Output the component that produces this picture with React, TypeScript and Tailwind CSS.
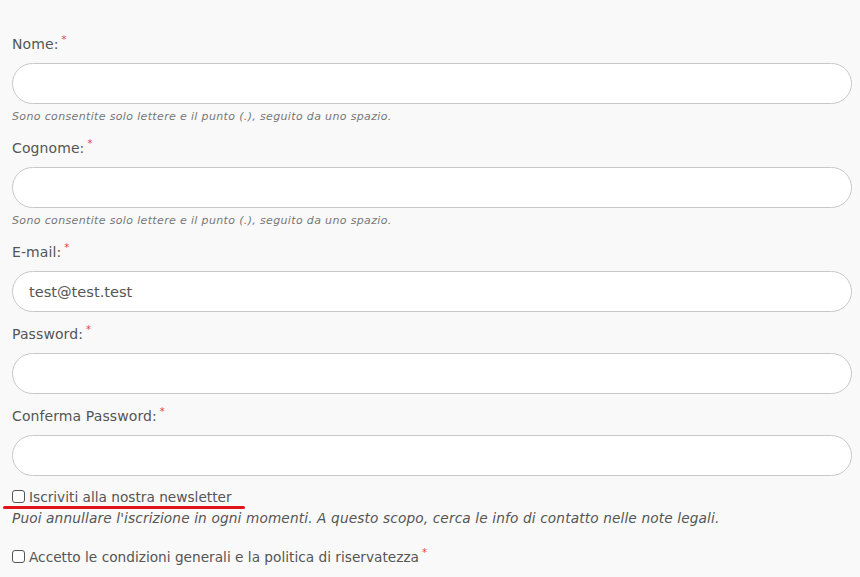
import React from "react";

const font = { fontFamily: '"DejaVu Sans", "Noto Sans", sans-serif' };

function Star() {
  return <span className="ml-[3px] relative -top-[6px] text-[10px] leading-none text-[#e8413b]">*</span>;
}

function Field({ label, value, hint }: { label: string; value?: string; hint?: string }) {
  return (
    <div className={hint ? "mb-[13px]" : "mb-[12px]"}>
      <div className="text-[14px] tracking-[0.1px] leading-[20px] text-[#555] mb-[9px]">
        {label}
        <Star />
      </div>
      <div className="h-[41px] w-full rounded-full border border-[#c8c8c8] bg-white flex items-center px-[16px] text-[14.6px] text-[#555]">
        {value}
      </div>
      {hint && (
        <div className="mt-[5px] text-[11px] tracking-[0.35px] leading-[16px] italic text-[#777]">{hint}</div>
      )}
    </div>
  );
}

function Box() {
  return <span className="inline-block w-[13px] h-[13px] border border-[#555] rounded-[3px] bg-white mr-[4px] align-[-1px]" />;
}

export default function App() {
  const hint = "Sono consentite solo lettere e il punto (.), seguito da uno spazio.";
  return (
    <div className="min-h-[577px] w-[860px] bg-[#f9f9f9] pl-[12px] pr-[8px] pt-[34px] relative overflow-hidden" style={font}>
      <Field label="Nome:" hint={hint} />
      <Field label="Cognome:" hint={hint} />
      <Field label="E-mail:" value="test@test.test" />
      <Field label="Password:" />
      <Field label="Conferma Password:" />
      <div className="mt-[-1px] text-[13.7px] leading-[20px] text-[#555] relative">
        <Box />
        Iscriviti alla nostra newsletter
        <div className="absolute left-[-9px] top-[19px] w-[242px] h-[3px] rounded-full bg-[#e0141b]" />
      </div>
      <div className="mt-[1px] text-[13.7px] tracking-[0.13px] leading-[20px] italic text-[#555]">
        Puoi annullare l'iscrizione in ogni momenti. A questo scopo, cerca le info di contatto nelle note legali.
      </div>
      <div className="mt-[19px] text-[13.7px] leading-[20px] text-[#555]">
        <Box />
        Accetto le condizioni generali e la politica di riservatezza
        <Star />
      </div>
    </div>
  );
}
